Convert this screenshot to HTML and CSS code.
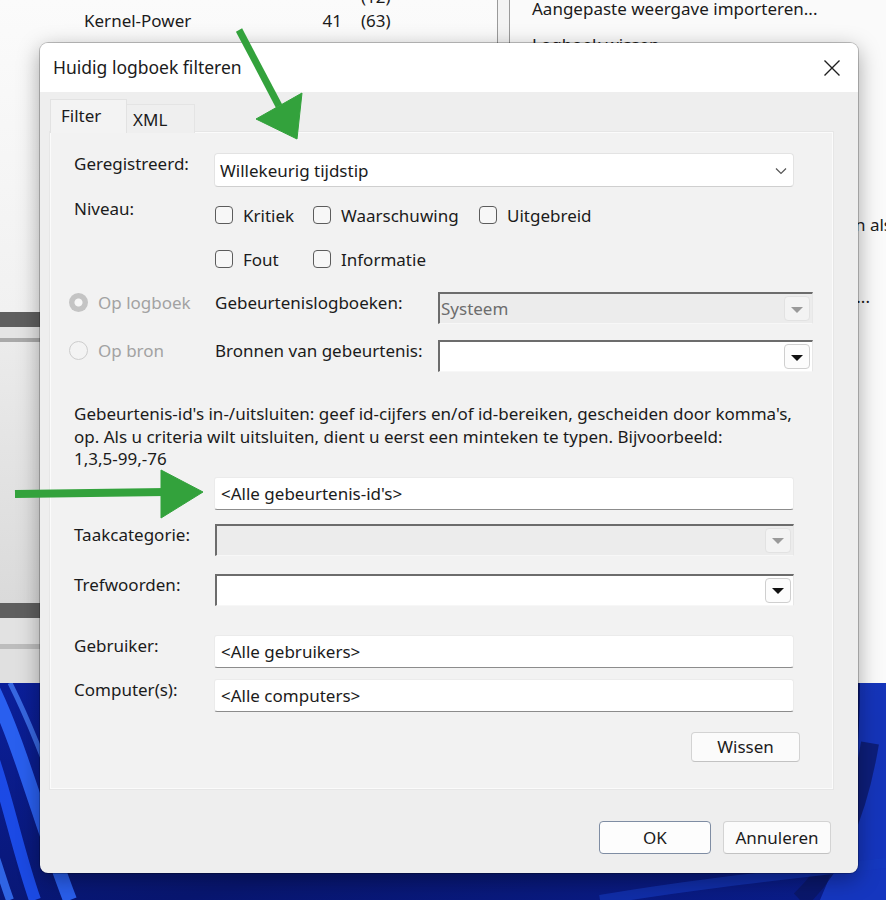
FILE: index.html
```html
<!DOCTYPE html>
<html lang="nl">
<head>
<meta charset="utf-8">
<title>Huidig logboek filteren</title>
<link rel="stylesheet" href="styles.css">
</head>
<body>
<div class="screen">
  <div class="app">
    <div class="pane-left">
      <div class="lp-list">
        <div class="list-row"><span class="c-name"></span><span class="c-count"></span><span class="c-paren">(12)</span></div>
        <div class="list-row"><span class="c-name">Kernel-Power</span><span class="c-count">41</span><span class="c-paren">(63)</span></div>
      </div>
      <div class="band-dark"></div>
      <div class="band-gap"></div>
      <div class="band-line"></div>
      <div class="lp-mid"></div>
      <div class="band-dark"></div>
      <div class="band-gap2"></div>
      <div class="band-line2"></div>
      <div class="lp-rest"></div>
    </div>
    <div class="splitter"></div>
    <div class="pane-right">
      <div class="action first">Aangepaste weergave importeren...</div>
      <div class="action">Logboek wissen...</div>
      <div class="action">Huidig logboek filteren...</div>
      <div class="action">Eigenschappen</div>
      <div class="action">Zoeken...</div>
      <div class="action">Gebeurtenissen in dit logboek</div>
      <div class="action tail">Alle gebeurtenissen opslaan als...</div>
      <div class="action">Een taak koppelen...</div>
      <div class="action tail2">Beeld...</div>
    </div>
  </div>
  <div class="wallpaper">
    <svg width="886" height="217" viewBox="0 0 886 217">
      <defs>
        <linearGradient id="wpBase" x1="0" y1="0" x2="1" y2="1">
          <stop offset="0" stop-color="#0b1f9a"/>
          <stop offset="0.6" stop-color="#081670"/>
          <stop offset="1" stop-color="#0a1d8c"/>
        </linearGradient>
      </defs>
      <rect width="886" height="217" fill="url(#wpBase)"/>
      <path d="M-10 0 C 20 60, 40 140, 70 217" stroke="#2f6bff" stroke-width="14" fill="none" opacity="0.85"/>
      <path d="M-20 40 C 5 100, 15 160, 35 217" stroke="#1e50f0" stroke-width="12" fill="none" opacity="0.9"/>
      <path d="M-30 110 C -10 150, 0 190, 10 217" stroke="#3a78ff" stroke-width="8" fill="none" opacity="0.8"/>
      <path d="M10 0 C 30 40, 45 80, 60 120" stroke="#4a86ff" stroke-width="5" fill="none" opacity="0.7"/>
      <path d="M860 0 L886 0 L886 217 L820 217 C 850 150, 860 80, 860 0 Z" fill="#1a3fd0" opacity="0.75"/>
      <path d="M870 60 C 860 120, 840 180, 800 217" stroke="#0a1660" stroke-width="18" fill="none" opacity="0.7"/>
      <path d="M600 217 C 700 200, 800 190, 886 180" stroke="#163bc0" stroke-width="10" fill="none" opacity="0.6"/>
    </svg>
  </div>

  <div class="dialog">
    <div class="dlg-head">
      <span class="dlg-title">Huidig logboek filteren</span>
      <svg class="close" width="18" height="18" viewBox="0 0 18 18"><path d="M1.5 1.5 L16.5 16.5 M16.5 1.5 L1.5 16.5" stroke="#1f1f1f" stroke-width="1.4" fill="none"/></svg>
    </div>
    <div class="dlg-body">
      <div class="tabs">
        <div class="tab active">Filter</div>
        <div class="tab">XML</div>
      </div>
      <div class="tab-panel">
        <div class="row r-logged">
          <div class="lbl">Geregistreerd:</div>
          <div class="select11">
            <span>Willekeurig tijdstip</span>
            <svg width="12" height="8" viewBox="0 0 12 8"><path d="M1 1.5 L6 6.5 L11 1.5" stroke="#555" stroke-width="1.2" fill="none"/></svg>
          </div>
        </div>
        <div class="row r-level">
          <div class="lbl lbl-level">Niveau:</div>
          <div class="checks">
            <label class="chk"><span class="box"></span>Kritiek</label>
            <label class="chk"><span class="box"></span>Waarschuwing</label>
            <label class="chk"><span class="box"></span>Uitgebreid</label>
            <label class="chk"><span class="box"></span>Fout</label>
            <label class="chk"><span class="box"></span>Informatie</label>
          </div>
        </div>
        <div class="row-src r-src1">
          <div class="radio-opt"><span class="radio on"></span>Op logboek</div>
          <div class="lbl">Gebeurtenislogboeken:</div>
          <div class="combo disabled"><span class="val">Systeem</span><span class="dd"><i></i></span></div>
        </div>
        <div class="row-src r-src2">
          <div class="radio-opt"><span class="radio"></span>Op bron</div>
          <div class="lbl">Bronnen van gebeurtenis:</div>
          <div class="combo"><span class="val"></span><span class="dd"><i></i></span></div>
        </div>
        <p class="desc">Gebeurtenis-id's in-/uitsluiten: geef id-cijfers en/of id-bereiken, gescheiden door komma's,<br>op. Als u criteria wilt uitsluiten, dient u eerst een minteken te typen. Bijvoorbeeld:<br>1,3,5-99,-76</p>
        <div class="row r-ids">
          <div class="lbl"></div>
          <div class="input">&lt;Alle gebeurtenis-id's&gt;</div>
        </div>
        <div class="row r-task">
          <div class="lbl">Taakcategorie:</div>
          <div class="combo wide disabled"><span class="val"></span><span class="dd"><i></i></span></div>
        </div>
        <div class="row r-key">
          <div class="lbl">Trefwoorden:</div>
          <div class="combo wide"><span class="val"></span><span class="dd"><i></i></span></div>
        </div>
        <div class="row r-user">
          <div class="lbl">Gebruiker:</div>
          <div class="input">&lt;Alle gebruikers&gt;</div>
        </div>
        <div class="row r-comp">
          <div class="lbl">Computer(s):</div>
          <div class="input">&lt;Alle computers&gt;</div>
        </div>
        <div class="clear-row"><button class="btn btn-clear">Wissen</button></div>
      </div>
      <div class="footer">
        <button class="btn btn-ok">OK</button>
        <button class="btn btn-cancel">Annuleren</button>
      </div>
    </div>
  </div>

  <svg class="arrows" width="886" height="900" viewBox="0 0 886 900">
    <g fill="#33a23c" stroke="#33a23c">
      <line x1="239" y1="30" x2="279" y2="106" stroke-width="7"/>
      <polygon points="256,119 302,93 297,139" stroke-width="1"/>
      <line x1="15" y1="494" x2="166" y2="492" stroke-width="8"/>
      <polygon points="161,470 161,518 203,492" stroke-width="1"/>
    </g>
  </svg>
</div>
</body>
</html>
```
FILE: styles.css
```css
* { box-sizing: border-box; }
html, body { margin: 0; padding: 0; }
body {
  width: 886px;
  height: 900px;
  overflow: hidden;
  font-family: "Noto Sans", "Open Sans", "DejaVu Sans", sans-serif;
  font-size: 17px;
  color: #1b1b1b;
}
.screen {
  position: relative;
  width: 886px;
  height: 900px;
  background: #0a1b86;
}

/* background event viewer */
.app {
  height: 683px;
  display: flex;
  background: #f7f7f7;
}
.pane-left {
  width: 497px;
  display: flex;
  flex-direction: column;
  background: #f6f6f6;
}
.lp-list {
  height: 312px;
  overflow: hidden;
  background: linear-gradient(#fbfbfb, #f1f1f1);
}
.list-row {
  display: grid;
  grid-template-columns: 84px 210px 48px 19px auto;
  height: 24px;
  line-height: 24px;
}
.list-row:first-child { margin-top: -15px; }
.list-row::before { content: ""; }
.c-name { grid-column: 2; }
.c-count { grid-column: 3; text-align: right; }
.c-paren { grid-column: 5; }
.band-dark { height: 15px; background: #5f5f5f; }
.band-gap { height: 11px; background: #e4e4e4; }
.band-line { height: 4px; background: #a9a9a9; }
.lp-mid { height: 261px; background: linear-gradient(#ebebeb, #dadada); }
.band-gap2 { height: 26px; background: #e2e2e2; }
.band-line2 { height: 5px; background: #bdbdbd; }
.lp-rest { flex: 1; background: #e0e0e0; }

.splitter {
  width: 13px;
  background: #f3f3f3;
  border-left: 1px solid #9a9a9a;
  border-right: 1px solid #9a9a9a;
}
.pane-right {
  flex: 1;
  background: #fafafa;
  overflow: hidden;
}
.action {
  height: 36px;
  line-height: 36px;
  padding-left: 22px;
  white-space: nowrap;
}
.action.first { height: 27px; line-height: 18px; }
.action.tail { padding-left: 130px; }
.action.tail2 { text-align: right; padding-right: 16px; }
.wallpaper { height: 217px; }
.wallpaper svg { display: block; }

/* dialog */
.dialog {
  position: absolute;
  left: 40px;
  top: 43px;
  width: 818px;
  height: 830px;
  background: #eeeeee;
  border-radius: 8px;
  overflow: hidden;
  display: flex;
  flex-direction: column;
  box-shadow: 0 0 0 1px rgba(0,0,0,0.22), 0 6px 22px rgba(0,0,0,0.35);
}
.dlg-head {
  height: 49px;
  flex: none;
  background: #ffffff;
  display: flex;
  align-items: center;
  justify-content: space-between;
  padding: 0 17px 2px 13px;
}
.dlg-title { font-size: 17.5px; }
.close { display: block; margin-top: 2px; }
.dlg-body {
  flex: 1;
  display: flex;
  flex-direction: column;
  padding: 7px 25px 0 10px;
}
.tabs {
  display: flex;
  align-items: flex-end;
  height: 34px;
  position: relative;
  z-index: 1;
}
.tab {
  height: 29px;
  width: 68px;
  padding-left: 6px;
  line-height: 29px;
  background: #efefef;
  border: 1px solid #e4e4e4;
  border-bottom: none;
  border-left: none;
}
.tab.active {
  height: 34px;
  width: 77px;
  padding-left: 10px;
  line-height: 32px;
  background: #f3f3f3;
  border: 1px solid #e2e2e2;
  border-bottom: none;
}
.tab-panel {
  height: 657px;
  margin-top: -1px;
  background: #f2f2f2;
  border: 1px solid #fbfbfb;
  box-shadow: 0 0 0 1px #e6e6e6;
  padding: 20px 39px 0 23px;
  display: flex;
  flex-direction: column;
}
.row {
  display: grid;
  grid-template-columns: 140px 580px;
  align-items: start;
}
.lbl {
  line-height: 22px;
  white-space: nowrap;
}
.select11 {
  height: 34px;
  background: #ffffff;
  border: 1px solid #e3e3e3;
  border-bottom-color: #cfcfcf;
  border-radius: 4px;
  display: flex;
  align-items: center;
  justify-content: space-between;
  padding: 0 6px 0 5px;
}
.select11 svg { display: block; margin-top: 1px; }

.r-level { margin-top: 11px; }
.checks {
  display: grid;
  grid-template-columns: 98px 166px auto;
  grid-auto-rows: 34px;
  row-gap: 10px;
}
.chk {
  display: flex;
  align-items: center;
  margin-left: 1px;
}
.box {
  width: 18px;
  height: 18px;
  border: 1px solid #5c5c5c;
  border-radius: 4px;
  background: #f7f7f7;
  margin-right: 10px;
  flex: none;
}

.row-src {
  display: grid;
  grid-template-columns: 140px 224px 375px;
  align-items: start;
}
.r-src1 { margin-top: 16px; }
.r-src2 { margin-top: 16px; }
.radio-opt {
  display: flex;
  align-items: center;
  margin-left: -5px;
  height: 20px;
  color: #a2a2a2;
}
.radio {
  width: 19px;
  height: 19px;
  border-radius: 50%;
  border: 1px solid #cdcdcd;
  background: #f3f3f3;
  margin-right: 10px;
  flex: none;
}
.radio.on {
  border: none;
  background: radial-gradient(circle, #f6f6f6 0 3.5px, #c4c4c4 4.5px);
}
.row-src .lbl { margin-left: 1px; }

.combo {
  height: 32px;
  background: #ffffff;
  border-top: 2px solid #6c6c6c;
  border-left: 2px solid #6c6c6c;
  border-right: 1px solid #e7e7e7;
  border-bottom: 1px solid #f7f7f7;
  display: flex;
  align-items: center;
  justify-content: space-between;
  padding: 0 2px 0 1px;
}
.combo.disabled { background: #ececec; }
.combo .val { color: #6d6d6d; }
.combo.wide { width: 579px; margin-left: 1px; }
.dd {
  width: 26px;
  height: 25px;
  border: 1px solid #cfcfcf;
  border-radius: 4px;
  background: #fcfcfc;
  display: flex;
  align-items: center;
  justify-content: center;
}
.dd i {
  display: block;
  width: 0;
  height: 0;
  border-left: 6px solid transparent;
  border-right: 6px solid transparent;
  border-top: 6px solid #111;
  margin-top: 2px;
}
.combo.disabled .dd { border-color: #e2e2e2; background: #f3f3f3; }
.combo.disabled .dd i { border-top-color: #9a9a9a; }

.desc {
  margin: 31px 0 0 0;
  line-height: 22.5px;
  white-space: nowrap;
}
.r-ids { margin-top: 6px; }
.input {
  height: 33px;
  background: #ffffff;
  border: 1px solid #ebebeb;
  border-bottom-color: #8c8c8c;
  border-radius: 3px;
  padding: 0 6px;
  line-height: 31px;
}
.r-task { margin-top: 14px; }
.r-key { margin-top: 18px; }
.r-user { margin-top: 29px; }
.r-comp { margin-top: 11px; }
.clear-row {
  display: flex;
  justify-content: flex-end;
  margin-top: 20px;
  width: 726px;
}
.btn {
  font-family: inherit;
  font-size: 17px;
  color: #1b1b1b;
  background: #fbfbfb;
  border: 1px solid #d3d3d3;
  border-bottom-color: #c2c2c2;
  border-radius: 4px;
  padding: 0;
}
.btn-clear { width: 109px; height: 30px; }
.footer {
  display: flex;
  justify-content: flex-end;
  gap: 12px;
  padding: 32px 2px 0 0;
}
.btn-ok {
  width: 112px;
  height: 33px;
  border-color: #7f8da3;
  background: #fdfdfd;
}
.btn-cancel { width: 108px; height: 33px; }

.arrows {
  position: absolute;
  left: 0;
  top: 0;
  pointer-events: none;
}
```
